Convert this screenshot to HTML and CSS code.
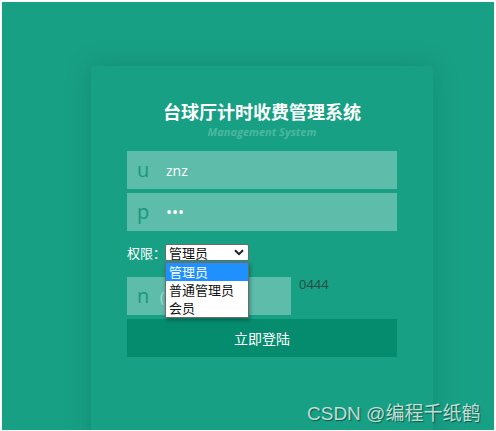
FILE: index.html
```html
<!DOCTYPE html>
<html lang="zh">
<head>
<meta charset="utf-8">
<title>台球厅计时收费管理系统</title>
<link rel="stylesheet" href="styles.css">
</head>
<body>
<div class="stage">
  <div class="card">
    <h1 class="title">台球厅计时收费管理系统</h1>
    <div class="subtitle">Management System</div>
    <div class="field"><span class="ico">u</span><span class="val">znz</span></div>
    <div class="field"><span class="ico">p</span><span class="val dots">•••</span></div>
    <div class="perm">
      <span class="perm-label">权限：</span>
      <div class="select-wrap">
        <div class="select">管理员
          <svg class="chev" viewBox="0 0 10 7" width="10" height="7"><path d="M1 1.2 L5 5.2 L9 1.2" fill="none" stroke="#222" stroke-width="2"/></svg>
        </div>
        <ul class="menu">
          <li class="on">管理员</li>
          <li>普通管理员</li>
          <li>会员</li>
        </ul>
      </div>
    </div>
    <div class="captcha">
      <div class="field small"><span class="ico">n</span><span class="ph">(</span></div>
      <span class="code">0444</span>
    </div>
    <div class="btn">立即登陆</div>
  </div>
  <div class="mark">CSDN @编程千纸鹤</div>
</div>
</body>
</html>
```

FILE: styles.css
```css
html, body { margin: 0; padding: 0; background: #ffffff; }
body { width: 496px; height: 431px; overflow: hidden; font-family: "Noto Sans", "Noto Sans CJK SC", sans-serif; }
.stage {
  position: relative;
  margin: 2px 2px 0 2px;
  height: 428px;
  background: #18a085;
  overflow: hidden;
  padding-top: 64px;
  box-sizing: border-box;
}
.card {
  margin-left: 89px;
  width: 342px;
  height: 420px;
  box-sizing: border-box;
  padding: 34px 36px 0 36px;
  background: #17a084;
  border-radius: 4px;
  box-shadow: 0 0 26px rgba(0, 70, 50, 0.22);
}
.title {
  margin: 0;
  text-align: center;
  font-size: 18px;
  line-height: 22px;
  font-weight: bold;
  color: #ffffff;
  font-family: "Noto Sans CJK SC", sans-serif;
}
.subtitle {
  text-align: center;
  font-size: 11px;
  line-height: 14px;
  margin-top: 3px;
  font-style: italic;
  font-weight: bold;
  color: #4cb89e;
  margin-bottom: 12px;
  font-family: "Open Sans", sans-serif;
}
.field {
  display: flex;
  align-items: center;
  height: 38px;
  background: #5dbdaa;
  margin-bottom: 4px;
}
.ico {
  width: 29px;
  padding-left: 10px;
  font-size: 20px;
  line-height: 38px;
  color: #16987d;
  font-family: "Open Sans", sans-serif;
}
.val {
  font-size: 14px;
  color: #ffffff;
  font-family: "Open Sans", sans-serif;
}
.dots { font-size: 16px; }
.perm {
  display: flex;
  align-items: center;
  margin-top: 13px;
  height: 17px;
}
.perm-label {
  flex-shrink: 0;
  white-space: nowrap;
  font-size: 13px;
  line-height: 17px;
  color: #ffffff;
  width: 38px;
  font-family: "Noto Sans CJK SC", sans-serif;
}
.select-wrap { position: relative; }
.select {
  display: flex;
  align-items: center;
  justify-content: space-between;
  width: 84px;
  height: 17px;
  box-sizing: border-box;
  padding: 0 4px 0 3px;
  background: #ffffff;
  border: 1px solid #6b6b6b;
  border-radius: 2px;
  font-size: 13px;
  color: #111;
  font-family: "Noto Sans CJK SC", sans-serif;
  line-height: 15px;
}
.menu {
  position: absolute;
  left: 0;
  top: 18px;
  width: 84px;
  box-sizing: border-box;
  margin: 0;
  padding: 0;
  list-style: none;
  background: #ffffff;
  border: 1px solid #6b6b6b;
  box-shadow: 1px 2px 4px rgba(0,0,0,0.35);
  z-index: 5;
}
.menu li {
  height: 18px;
  line-height: 18px;
  padding-left: 3px;
  font-size: 13px;
  color: #111;
  font-family: "Noto Sans CJK SC", sans-serif;
}
.menu li.on { background: #1e90ff; color: #ffffff; }
.captcha {
  display: flex;
  align-items: flex-start;
  margin-top: 16px;
}
.field.small { width: 164px; margin-bottom: 4px; }
.ph {
  font-size: 14px;
  color: #a8ddd1;
  font-family: "Open Sans", sans-serif;
  margin-left: -6px;
}
.code {
  margin-left: 8px;
  margin-top: -2px;
  font-size: 13px;
  color: #2a4a44;
  font-family: "Open Sans", sans-serif;
}
.btn {
  height: 38px;
  line-height: 38px;
  text-align: center;
  background: #058c6f;
  color: #ffffff;
  font-size: 14px;
  font-family: "Noto Sans CJK SC", sans-serif;
}
.mark {
  position: absolute;
  left: 305px;
  top: 396px;
  font-size: 19px;
  color: rgba(225, 240, 236, 0.85);
  text-shadow: 1px 1px 1px rgba(0, 40, 30, 0.6);
  font-family: "Liberation Sans", "Noto Sans CJK SC", sans-serif;
  white-space: nowrap;
}
```
